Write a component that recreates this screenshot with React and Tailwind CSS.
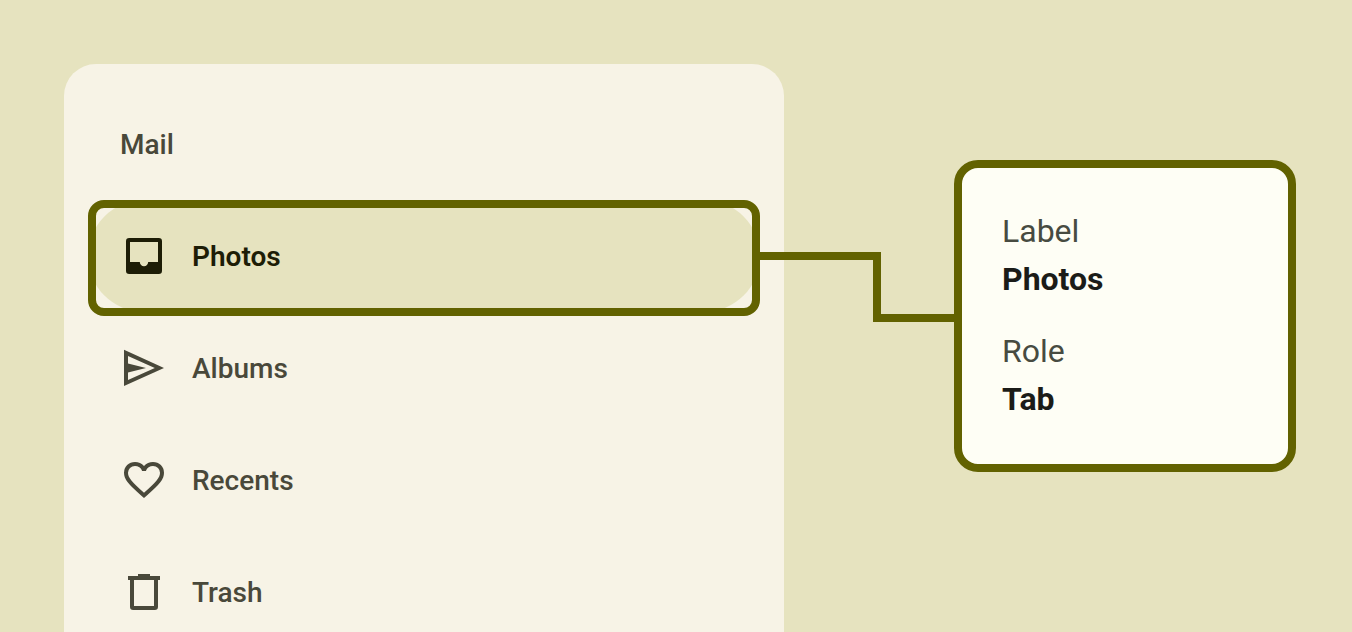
function InboxIcon() {
  return (
    <svg viewBox="0 0 24 24" className="size-12 shrink-0" fill="currentColor" aria-hidden="true">
      <path
        fillRule="evenodd"
        d="M4.6 3H19.4Q21 3 21 4.6V19.4Q21 21 19.4 21H4.6Q3 21 3 19.4V4.6Q3 3 4.6 3ZM5 5V15H9.9A2.1 2.1 0 0 0 14.1 15H19V5Z"
      />
    </svg>
  );
}

function SendIcon() {
  return (
    <svg viewBox="0 0 24 24" className="size-12 shrink-0" fill="currentColor" aria-hidden="true">
      <path fillRule="evenodd" d="M2 2.9L22 12L2 21ZM4 6V9.7L13 12L4 14.3V18L17.4 12Z" />
    </svg>
  );
}

function HeartIcon() {
  return (
    <svg viewBox="0 -960 960 960" className="size-12 shrink-0" fill="currentColor" aria-hidden="true">
      <path
        transform="matrix(1 0 0 .981 0 -2.3)"
        d="m480-120-58-52q-101-91-167-157T150-447.5Q111-500 95.5-544T80-634q0-94 63-157t157-63q52 0 99 22t81 62q34-40 81-62t99-22q94 0 157 63t63 157q0 46-15.5 90T810-447.5Q771-395 705-329T538-172l-58 52Zm0-108q96-86 158-147.5t98-107q36-45.5 50-81t14-70.5q0-60-40-100t-100-40q-47 0-87 26.5T518-670h-76q-15-51-55-77.5T300-774q-60 0-100 40t-40 100q0 35 14 70.5t50 81q36 45.5 98 107T480-228Z"
      />
    </svg>
  );
}

function TrashIcon() {
  return (
    <svg viewBox="0 0 24 24" className="size-12 shrink-0" fill="currentColor" aria-hidden="true">
      <path fillRule="evenodd" d="M9 3H15V4H20V6H19V19.4Q19 21 17.4 21H6.6Q5 21 5 19.4V6H4V4H9ZM7 6V19H17V6Z" />
    </svg>
  );
}

const items = [
  { label: "Photos", Icon: InboxIcon, selected: true },
  { label: "Albums", Icon: SendIcon },
  { label: "Recents", Icon: HeartIcon },
  { label: "Trash", Icon: TrashIcon },
];

function Drawer() {
  return (
    <nav aria-labelledby="drawer-title" className="min-w-0 flex-1 rounded-t-4xl bg-[#f7f3e6] px-6 pt-6 text-[28px] leading-10 font-medium text-[#49483a]">
      <h2 id="drawer-title" className="flex h-28 items-center px-8 pt-0.5">Mail</h2>
      <div role="tablist" aria-orientation="vertical" aria-labelledby="drawer-title">
        {items.map(({ label, Icon, selected }) => (
          <div key={label} className="relative" role="presentation">
            <button
              type="button"
              role="tab"
              aria-selected={Boolean(selected)}
              className={
                "flex h-28 w-full items-center gap-6 rounded-full px-8 text-left " +
                (selected ? "bg-[#e6e3bf] font-semibold text-[#1d1d06]" : "")
              }
            >
              <Icon />
              <span className="pt-0.5">{label}</span>
            </button>
            {selected && (
              <div className="pointer-events-none absolute inset-x-0 top-0 -bottom-1 rounded-2xl border-8 border-[#626200]" />
            )}
          </div>
        ))}
      </div>
    </nav>
  );
}

function Connector() {
  return (
    <svg viewBox="0 0 194 70" className="z-10 mt-47 -ml-6 h-[70px] w-[194px] shrink-0" fill="none" aria-hidden="true">
      <path d="M0 4H117V66H194" stroke="#626200" strokeWidth="8" />
    </svg>
  );
}

function Callout() {
  return (
    <dl className="mt-24 w-[342px] shrink-0 self-start rounded-3xl border-8 border-[#626200] bg-[#fefef5] px-10 pt-[39px] pb-[41px] text-[32px] leading-12">
      <dt className="text-[#474b41]">Label</dt>
      <dd className="mb-6 font-bold text-[#1b1c18]">Photos</dd>
      <dt className="text-[#474b41]">Role</dt>
      <dd className="font-bold text-[#1b1c18]">Tab</dd>
    </dl>
  );
}

export default function App() {
  return (
    <main className="flex h-screen overflow-hidden bg-[#e6e3bf] pt-16 pr-14 pl-16 font-['Roboto',sans-serif]">
      <Drawer />
      <Connector />
      <Callout />
    </main>
  );
}
